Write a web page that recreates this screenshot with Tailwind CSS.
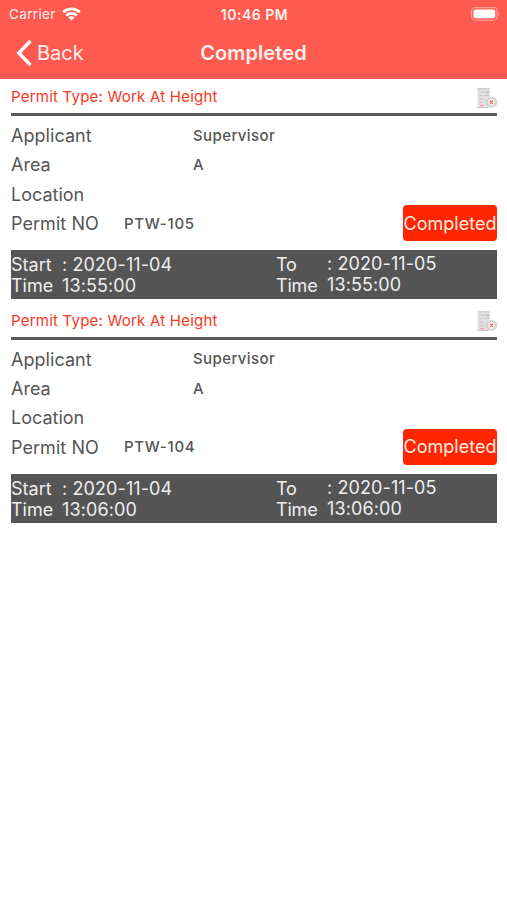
<!DOCTYPE html>
<html lang="en">
<head>
<meta charset="utf-8">
<title>Completed</title>
<script src="https://cdn.jsdelivr.net/npm/@tailwindcss/browser@4"></script>
</head>
<body class="bg-white font-['Inter','Liberation_Sans',sans-serif] text-[#555] whitespace-nowrap">
<svg class="hidden">
  <symbol id="doc" viewBox="0 0 22 22">
    <path d="M1.5 1h12.500v9l-2 10.500H1.500z" fill="#e0e0e0"/>
    <path d="M1.500 1H14v1.500H1.500z" fill="#d2d2d2"/>
    <path d="M3.500 5h8M3.500 8.500h3M8 8.500h5M3.500 12h3M3.500 15.500h3M1.500 20.500h11" stroke="#c6c6c6" stroke-width="1" fill="none"/>
    <path d="M11 5.500h2" stroke="#a5a5a5"/>
    <path d="M4 18.500h4" stroke="#f3a6ae" stroke-width="1.300"/>
    <ellipse cx="15.500" cy="15.300" rx="5.900" ry="5.400" fill="#d3d3d3"/>
    <circle cx="15.500" cy="15.300" r="3.600" fill="#f7e9e8"/>
    <path d="M14.200 14l2.600 2.600M16.800 14l-2.600 2.600" stroke="#f2574f" stroke-width="1.100"/>
  </symbol>
</svg>
<header class="h-[79px] bg-[#ff5a50] text-[#fff0ee]">
  <div class="grid grid-cols-3 items-center h-7 pl-[9px] pr-[7px]">
    <div class="flex items-center gap-[6px]">
      <span class="text-[13.500px] tracking-[0.35px]">Carrier</span>
      <svg class="w-[19px] h-[14px]" viewBox="0 0 19 14" fill="none" stroke="#fff" stroke-width="2.600"><path d="M1.200 5.200a12 12 0 0 1 16.600 0M4.200 8.500a7.700 7.700 0 0 1 10.600 0"/><path d="M9.500 13.500L6.300 10.600a4.600 4.600 0 0 1 6.400 0z" fill="#fff" stroke="none"/></svg>
    </div>
    <div class="text-center text-[14px] font-semibold tracking-[0.500px]">10:46 PM</div>
    <div class="flex justify-end">
      <svg class="w-[30px] h-[14px]" viewBox="0 0 30 14"><rect x="1.600" y=".6" width="25.500" height="12.500" rx="3.500" fill="none" stroke="#ff9d95" stroke-width="1.200"/><rect x="3.500" y="2.500" width="21.700" height="8.800" rx="2" fill="#fff"/><path d="M28.300 4.700q2.300 2.200 0 4.400z" fill="#ff9d95"/></svg>
    </div>
  </div>
  <div class="grid grid-cols-3 items-center h-[49px] pl-4 pr-4">
    <div class="flex items-center gap-[5px]">
      <svg class="w-4 h-[28px]" viewBox="0 0 16 28" fill="none" stroke="#fff" stroke-width="3.400"><path d="M14.500 2L2.800 14l11.700 12"/></svg>
      <span class="text-[20px]">Back</span>
    </div>
    <div class="text-center text-[20px] font-semibold tracking-[0.1px]">Completed</div>
  </div>
</header>
<main class="pl-[11px] pr-[10px]">
  <section class="h-[223.500px]">
    <div class="flex justify-between items-center h-[37px] pt-[3px] border-b-[3px] border-[#5a5a5a]">
      <h2 class="text-[15px] tracking-[0.22px] text-[#f8371b]">Permit Type: Work At Height</h2>
      <svg class="w-[22px] h-[22px] -mr-px"><use href="#doc"/></svg>
    </div>
    <div class="h-[134px] pt-[5px]">
      <div class="flex items-center h-[29.300px]"><span class="w-[182px] text-[18px] tracking-[0.05px]">Applicant</span><span class="text-[15px] pt-px font-[450] tracking-[0.400px]">Supervisor</span></div>
      <div class="flex items-center h-[29.300px]"><span class="w-[182px] text-[18px]">Area</span><span class="text-[15px] pt-px font-[450]">A</span></div>
      <div class="flex items-center h-[29.300px]"><span class="text-[18px]">Location</span></div>
      <div class="flex items-center h-[29.300px]"><span class="w-[113px] text-[18px] tracking-[0.05px]">Permit NO</span><span class="text-[15px] pt-px font-[450] tracking-[0.700px]">PTW-105</span><span class="ml-auto flex items-center justify-center w-[94px] h-9 rounded-[4px] bg-[#ff2600] text-[#ffe9e4] text-[18px] -mt-px">Completed</span></div>
    </div>
    <div class="flex h-[49px] bg-[#555] text-[#eee] text-[18px] leading-[21.300px]">
      <div class="w-[51px] pt-1">Start<br>Time</div><div class="w-[214px] pt-1 tracking-[0.1px]">: 2020-11-04<br>13:55:00</div>
      <div class="w-[51px] pt-1 tracking-[-0.200px]">To<br>Time</div><div class="pt-[3px] tracking-[0.1px]">: 2020-11-05<br>13:55:00</div>
    </div>
  </section>
  <section class="h-[223.500px]">
    <div class="flex justify-between items-center h-[37px] pt-[3px] border-b-[3px] border-[#5a5a5a]">
      <h2 class="text-[15px] tracking-[0.22px] text-[#f8371b]">Permit Type: Work At Height</h2>
      <svg class="w-[22px] h-[22px] -mr-px"><use href="#doc"/></svg>
    </div>
    <div class="h-[134px] pt-[5px]">
      <div class="flex items-center h-[29.300px]"><span class="w-[182px] text-[18px] tracking-[0.05px]">Applicant</span><span class="text-[15px] pt-px font-[450] tracking-[0.400px]">Supervisor</span></div>
      <div class="flex items-center h-[29.300px]"><span class="w-[182px] text-[18px]">Area</span><span class="text-[15px] pt-px font-[450]">A</span></div>
      <div class="flex items-center h-[29.300px]"><span class="text-[18px]">Location</span></div>
      <div class="flex items-center h-[29.300px]"><span class="w-[113px] text-[18px] tracking-[0.05px]">Permit NO</span><span class="text-[15px] pt-px font-[450] tracking-[0.700px]">PTW-104</span><span class="ml-auto flex items-center justify-center w-[94px] h-9 rounded-[4px] bg-[#ff2600] text-[#ffe9e4] text-[18px] -mt-px">Completed</span></div>
    </div>
    <div class="flex h-[49px] bg-[#555] text-[#eee] text-[18px] leading-[21.300px]">
      <div class="w-[51px] pt-1">Start<br>Time</div><div class="w-[214px] pt-1 tracking-[0.1px]">: 2020-11-04<br>13:06:00</div>
      <div class="w-[51px] pt-1 tracking-[-0.200px]">To<br>Time</div><div class="pt-[3px] tracking-[0.1px]">: 2020-11-05<br>13:06:00</div>
    </div>
  </section>
</main>
</body>
</html>
